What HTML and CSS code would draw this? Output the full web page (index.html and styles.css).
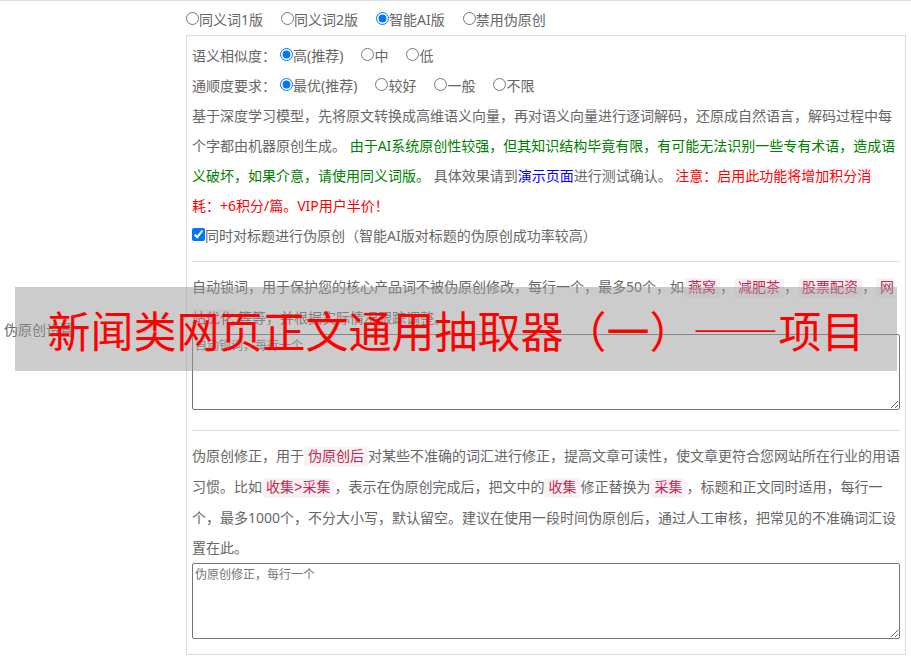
FILE: index.html
```html
<!DOCTYPE html>
<html lang="zh-CN">
<head>
  <meta charset="utf-8">
  <title>伪原创设置</title>
  <link rel="stylesheet" href="styles.css">
</head>
<body>
  <form class="setting-row">
    <div class="setting-name">伪原创设置</div>

    <div class="setting-body">
      <div class="options">
        <label><input type="radio" name="mode">同义词1版</label>
        <label><input type="radio" name="mode">同义词2版</label>
        <label><input type="radio" name="mode" checked>智能AI版</label>
        <label><input type="radio" name="mode">禁用伪原创</label>
      </div>

      <div class="panel">
        <div class="options">
          <span class="options-title">语义相似度：</span>
          <label><input type="radio" name="similar" checked>高(推荐)</label>
          <label><input type="radio" name="similar">中</label>
          <label><input type="radio" name="similar">低</label>
        </div>
        <div class="options">
          <span class="options-title">通顺度要求：</span>
          <label><input type="radio" name="smooth" checked>最优(推荐)</label>
          <label><input type="radio" name="smooth">较好</label>
          <label><input type="radio" name="smooth">一般</label>
          <label><input type="radio" name="smooth">不限</label>
        </div>
        <p>基于深度学习模型，先将原文转换成高维语义向量，再对语义向量进行逐词解码，还原成自然语言，解码过程中每个字都由机器原创生成。 <span class="green">由于AI系统原创性较强，但其知识结构毕竟有限，有可能无法识别一些专有术语，造成语义破坏，如果介意，请使用同义词版。</span> 具体效果请到<a href="#">演示页面</a>进行测试确认。 <span class="red">注意：启用此功能将增加积分消<br>耗：+6积分/篇。VIP用户半价！</span></p>
        <div class="options">
          <label><input type="checkbox" checked>同时对标题进行伪原创（智能AI版对标题的伪原创成功率较高）</label>
        </div>

        <!-- 自动锁词 -->
        <div class="words">
          <p>自动锁词，用于保护您的核心产品词不被伪原创修改，每行一个，最多50个，如<code>燕窝</code>，<code>减肥茶</code>，<code>股票配资</code>，<code>网站优化</code>等等，并根据实际情况跟踪调整。</p>
          <textarea rows="4" aria-label="自动锁词" placeholder="自动锁词，每行一个"></textarea>
        </div>

        <!-- 伪原创修正 -->
        <div class="words">
          <p>伪原创修正，用于<code>伪原创后</code>对某些不准确的词汇进行修正，提高文章可读性，使文章更符合您网站所在行业的用语习惯。比如<code>收集&gt;采集</code>，表示在伪原创完成后，把文中的<code>收集</code>修正替换为<code>采集</code>，标题和正文同时适用，每行一个，最多1000个，不分大小写，默认留空。建议在使用一段时间伪原创后，通过人工审核，把常见的不准确词汇设置在此。</p>
          <textarea rows="4" aria-label="伪原创修正" placeholder="伪原创修正，每行一个"></textarea>
        </div>
      </div>
    </div>
  </form>

  <div class="banner">新闻类网页正文通用抽取器（一）——项目</div>
</body>
</html>
```
FILE: styles.css
```css
* {
  box-sizing: border-box;
}

body {
  position: relative;
  margin: 0;
  font-family: "Noto Sans", "Noto Sans CJK SC", sans-serif;
  font-size: 14px;
  line-height: 30px;
  text-spacing-trim: space-all;
  color: #666;
  background: #fff;
}

.setting-row {
  display: flex;
  align-items: center;
  padding: 4px 5px 3px 4px;
  border-top: 1px solid #ddd;
}

.setting-name {
  flex: 0 0 182px;
}

.setting-body {
  flex: 1;
  min-width: 0;
}

.panel {
  padding: 5px;
  border: 1px solid #ddd;
}

.options {
  display: flex;
  flex-wrap: wrap;
  column-gap: 18px;
}

.options-title {
  margin-right: -14px;
}

input {
  margin: 0;
}

p {
  margin: 0;
}

a {
  color: #00f;
  text-decoration: none;
}

.green {
  color: #008000;
}

.red {
  color: #f00;
}

code {
  padding: 2px 4px;
  border-radius: 4px;
  font-family: "Liberation Mono", "Noto Sans CJK SC", monospace;
  font-size: 14px;
  color: #c7254e;
  background: #f9f2f4;
}

.words {
  margin-top: 10px;
  padding: 10px 0;
  border-top: 1px solid #ddd;
}

textarea {
  display: block;
  width: 100%;
  height: 76px;
  padding: 2px;
  border: 1px solid #767676;
  border-radius: 2px;
  font-family: inherit;
  font-size: 12px;
  line-height: 18px;
  resize: both;
}

textarea::placeholder {
  color: #757575;
}

/* title strip over the form */
.banner {
  position: absolute;
  top: 287px;
  left: 15px;
  right: 14px;
  padding: 10px 0;
  font-family: "Noto Sans CJK SC", sans-serif;
  font-size: 43px;
  line-height: 64px;
  text-align: center;
  white-space: nowrap;
  color: #f00;
  background: rgba(153, 153, 153, 0.5);
}
```
